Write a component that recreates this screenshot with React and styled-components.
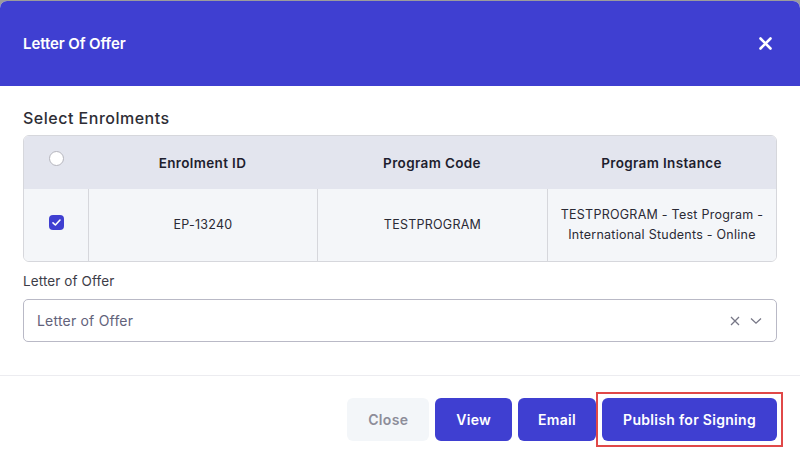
import React from "react";
import styled, { createGlobalStyle } from "styled-components";

const Global = createGlobalStyle`
  html, body { margin: 0; padding: 0; }
  body {
    background: #9c9c9c;
    font-family: Inter, "Noto Sans", sans-serif;
    overflow: hidden;
  }
  * { box-sizing: border-box; }
`;

const Page = styled.div`
  width: 800px;
  height: 463px;
  padding-top: 1px;
`;

const Modal = styled.div`
  width: 800px;
  height: 480px;
  background: #ffffff;
  border-radius: 7px 7px 0 0;
  overflow: hidden;
  display: flex;
  flex-direction: column;
`;

const Header = styled.div`
  height: 85px;
  flex-shrink: 0;
  background: #3f3fd1;
  display: flex;
  align-items: center;
  justify-content: space-between;
  padding: 0 28px 0 23px;
`;

const Title = styled.h2`
  margin: 0;
  color: #ffffff;
  font-size: 15px;
  font-weight: 600;
  letter-spacing: -0.1px;
`;

const CloseIcon = styled.button`
  background: none;
  border: none;
  padding: 0;
  display: flex;
  color: #fff;
  cursor: pointer;
`;

const Body = styled.div`
  padding: 22px 23px 0 23px;
  display: flex;
  flex-direction: column;
`;

const SectionTitle = styled.div`
  font-size: 16px;
  font-weight: 500;
  color: #2d2d35;
  letter-spacing: 0.5px;
  margin-bottom: 7px;
  line-height: 20px;
`;

const Table = styled.div`
  border: 1px solid #d6d7dc;
  border-radius: 6px;
  overflow: hidden;
  display: grid;
  grid-template-columns: 64px 229px 230px 1fr;
`;

const HeadCell = styled.div`
  height: 53px;
  background: #e3e5ee;
  display: flex;
  align-items: center;
  justify-content: center;
  font-size: 13.5px;
  font-weight: 600;
  letter-spacing: 0.35px;
  color: #1e1e2e;
  padding-bottom: ${(p) => (p.$check ? "8px" : "0")};
`;

const Cell = styled.div`
  height: 72px;
  background: #f4f6f9;
  display: flex;
  align-items: center;
  justify-content: center;
  text-align: center;
  font-size: 12.5px;
  letter-spacing: 0.25px;
  line-height: 20px;
  color: #2a2a35;
  border-left: ${(p) => (p.$first ? "none" : "1px solid #d6d7dc")};
  padding: 0 6px ${(p) => (p.$first ? "6px" : "0")};
`;

const RadioBox = styled.span`
  width: 15px;
  height: 15px;
  border-radius: 50%;
  border: 1px solid #b5b5bd;
  background: #fff;
  display: inline-block;
`;

const CheckBox = styled.span`
  width: 15px;
  height: 15px;
  border-radius: 4px;
  background: #3f3fd1;
  display: inline-flex;
  align-items: center;
  justify-content: center;
`;

const FieldLabel = styled.div`
  margin-top: 11px;
  font-size: 13.5px;
  color: #3d3d48;
  letter-spacing: 0.1px;
  line-height: 16px;
`;

const Select = styled.div`
  margin-top: 10px;
  height: 43px;
  border: 1px solid #b9b9c6;
  border-radius: 5px;
  display: flex;
  align-items: center;
  padding: 0 14px 0 13px;
  font-size: 14px;
  letter-spacing: 0.2px;
  color: #62627a;
`;

const Placeholder = styled.span`
  flex: 1;
`;

const SelectIcons = styled.span`
  display: flex;
  align-items: center;
  gap: 10px;
  color: #777786;
`;

const Divider = styled.div`
  margin-top: 33px;
  height: 1px;
  background: #ececf0;
`;

const Footer = styled.div`
  display: flex;
  justify-content: flex-end;
  align-items: center;
  gap: 6px;
  padding: 16px 17px 0 0;
`;

const Button = styled.button`
  height: 43px;
  padding: 0 ${(p) => p.$px || "20px"};
  border: none;
  border-radius: 6px;
  font-family: inherit;
  font-size: 14px;
  font-weight: 600;
  letter-spacing: 0.3px;
  background: ${(p) => (p.$muted ? "#f3f6f9" : "#3f3fd1")};
  color: ${(p) => (p.$muted ? "#8d8d99" : "#ffffff")};
  cursor: pointer;
`;

const Highlight = styled.div`
  padding: 4px;
  border: 2px solid #e04848;
  margin-left: -6px;
  display: flex;
`;

export default function App() {
  return (
    <>
      <Global />
      <Page>
        <Modal>
          <Header>
            <Title>Letter Of Offer</Title>
            <CloseIcon aria-label="close">
              <svg width="13" height="13" viewBox="0 0 13 13">
                <path d="M1.5 1.5 L11.5 11.5 M11.5 1.5 L1.5 11.5" stroke="#fff" strokeWidth="2.6" strokeLinecap="round" />
              </svg>
            </CloseIcon>
          </Header>
          <Body>
            <SectionTitle>Select Enrolments</SectionTitle>
            <Table>
              <HeadCell $check>
                <RadioBox />
              </HeadCell>
              <HeadCell>Enrolment ID</HeadCell>
              <HeadCell>Program Code</HeadCell>
              <HeadCell>Program Instance</HeadCell>
              <Cell $first>
                <CheckBox>
                  <svg width="11" height="11" viewBox="0 0 11 11">
                    <path d="M2 5.8 L4.4 8 L9 3" fill="none" stroke="#fff" strokeWidth="1.6" strokeLinecap="round" strokeLinejoin="round" />
                  </svg>
                </CheckBox>
              </Cell>
              <Cell>EP-13240</Cell>
              <Cell>TESTPROGRAM</Cell>
              <Cell>
                TESTPROGRAM - Test Program -<br />
                International Students - Online
              </Cell>
            </Table>
            <FieldLabel>Letter of Offer</FieldLabel>
            <Select>
              <Placeholder>Letter of Offer</Placeholder>
              <SelectIcons>
                <svg width="10" height="10" viewBox="0 0 10 10">
                  <path d="M1 1 L9 9 M9 1 L1 9" stroke="currentColor" strokeWidth="1.3" />
                </svg>
                <svg width="12" height="8" viewBox="0 0 12 8">
                  <path d="M1 1.5 L6 6.2 L11 1.5" fill="none" stroke="currentColor" strokeWidth="1.3" />
                </svg>
              </SelectIcons>
            </Select>
          </Body>
          <Divider />
          <Footer>
            <Button $muted $px="21px">Close</Button>
            <Button $px="21px">View</Button>
            <Button>Email</Button>
            <Highlight>
              <Button $px="21px">Publish for Signing</Button>
            </Highlight>
          </Footer>
        </Modal>
      </Page>
    </>
  );
}
